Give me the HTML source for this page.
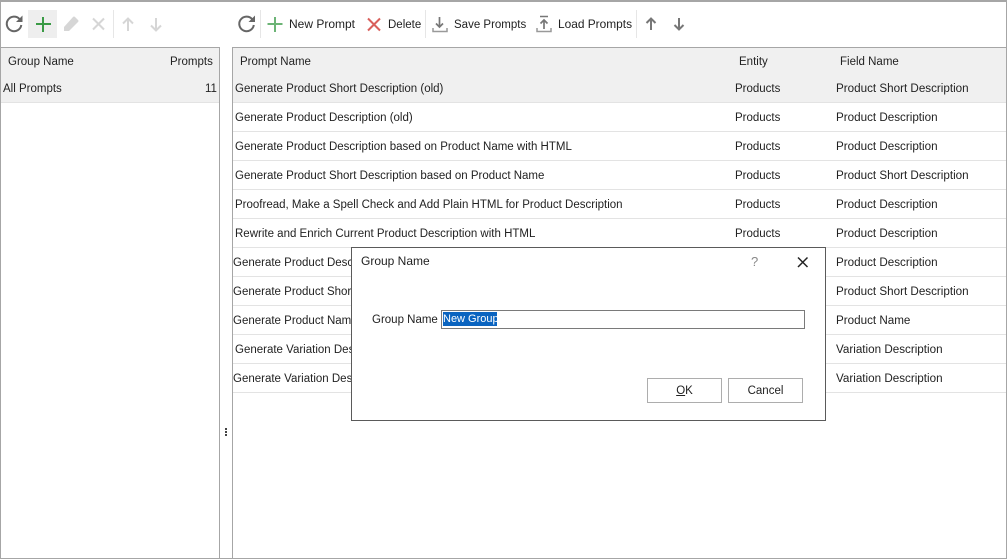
<!DOCTYPE html>
<html>
<head>
<meta charset="utf-8">
<style>
html,body{margin:0;padding:0;background:#fff}
#p{position:relative;width:1007px;height:559px;overflow:hidden;background:#fff;font-family:"Liberation Sans",sans-serif;font-size:11.5px;color:#222}
#p div{position:absolute}
.t{white-space:nowrap;line-height:16px;height:16px;margin-top:1px}
.n{margin-top:0}
.f{font-size:11.650px}
.l{background:#e3e3e3;height:1px}
svg{position:absolute;overflow:visible}
</style>
</head>
<body>
<div id="p">
<!-- outer frame -->
<div style="left:0;top:0;width:1007px;height:2px;background:#a6a6a6"></div>
<div style="left:0;top:0;width:1px;height:559px;background:#a6a6a6"></div>
<div style="left:1006px;top:0;width:1px;height:559px;background:#a6a6a6"></div>
<div style="left:0;top:558px;width:1007px;height:1px;background:#a6a6a6"></div>

<!-- left panel -->
<div style="left:0;top:47px;width:220px;height:1px;background:#a6a6a6"></div>
<div style="left:219px;top:47px;width:1px;height:512px;background:#a6a6a6"></div>
<div style="left:1px;top:48px;width:218px;height:54px;background:#f0f0f0"></div>
<div class="l" style="left:1px;top:102px;width:218px"></div>
<div class="t" style="left:8px;top:53px">Group Name</div>
<div class="t" style="left:170px;top:53px">Prompts</div>
<div class="t" style="left:3px;top:80px">All Prompts</div>
<div class="t" style="left:205px;top:80px">11</div>

<!-- right panel -->
<div style="left:232px;top:47px;width:775px;height:1px;background:#a6a6a6"></div>
<div style="left:232px;top:47px;width:1px;height:512px;background:#a6a6a6"></div>
<div style="left:233px;top:48px;width:773px;height:54px;background:#f0f0f0"></div>
<div class="t" style="left:240px;top:53px">Prompt Name</div>
<div class="t" style="left:739px;top:53px">Entity</div>
<div class="t" style="left:840px;top:53px">Field Name</div>

<div class="l" style="left:233px;top:102px;width:773px"></div>
<div class="l" style="left:233px;top:131px;width:773px"></div>
<div class="l" style="left:233px;top:160px;width:773px"></div>
<div class="l" style="left:233px;top:189px;width:773px"></div>
<div class="l" style="left:233px;top:218px;width:773px"></div>
<div class="l" style="left:233px;top:247px;width:773px"></div>
<div class="l" style="left:233px;top:276px;width:773px"></div>
<div class="l" style="left:233px;top:305px;width:773px"></div>
<div class="l" style="left:233px;top:334px;width:773px"></div>
<div class="l" style="left:233px;top:363px;width:773px"></div>
<div class="l" style="left:233px;top:392px;width:773px"></div>

<div class="t" style="left:235px;top:80px">Generate Product Short Description (old)</div>
<div class="t" style="left:235px;top:109px">Generate Product Description (old)</div>
<div class="t" style="left:235px;top:138px">Generate Product Description based on Product Name with HTML</div>
<div class="t" style="left:235px;top:167px">Generate Product Short Description based on Product Name</div>
<div class="t" style="left:235px;top:196px">Proofread, Make a Spell Check and Add Plain HTML for Product Description</div>
<div class="t" style="left:235px;top:225px">Rewrite and Enrich Current Product Description with HTML</div>
<div class="t" style="left:233px;top:254px">Generate Product Description</div>
<div class="t" style="left:233px;top:283px">Generate Product Short Description</div>
<div class="t" style="left:233px;top:312px">Generate Product Name</div>
<div class="t" style="left:235px;top:341px">Generate Variation Description</div>
<div class="t" style="left:233px;top:370px">Generate Variation Description</div>

<div class="t" style="left:735px;top:80px">Products</div>
<div class="t" style="left:735px;top:109px">Products</div>
<div class="t" style="left:735px;top:138px">Products</div>
<div class="t" style="left:735px;top:167px">Products</div>
<div class="t" style="left:735px;top:196px">Products</div>
<div class="t" style="left:735px;top:225px">Products</div>

<div class="t f" style="left:836px;top:80px">Product Short Description</div>
<div class="t f" style="left:836px;top:109px">Product Description</div>
<div class="t f" style="left:836px;top:138px">Product Description</div>
<div class="t f" style="left:836px;top:167px">Product Short Description</div>
<div class="t f" style="left:836px;top:196px">Product Description</div>
<div class="t f" style="left:836px;top:225px">Product Description</div>
<div class="t f" style="left:836px;top:254px">Product Description</div>
<div class="t f" style="left:836px;top:283px">Product Short Description</div>
<div class="t f" style="left:836px;top:312px">Product Name</div>
<div class="t f" style="left:836px;top:341px">Variation Description</div>
<div class="t f" style="left:836px;top:370px">Variation Description</div>

<!-- splitter dots -->
<div style="left:225px;top:428px;width:2px;height:2px;background:#444"></div>
<div style="left:225px;top:431px;width:2px;height:2px;background:#444"></div>
<div style="left:225px;top:434px;width:2px;height:2px;background:#444"></div>

<!-- left toolbar -->
<div style="left:28px;top:10px;width:29px;height:28px;background:#eeeeee"></div>
<svg style="left:0;top:0" width="240" height="47" fill="none">
<path d="M19.500 19A7.300 7.300 0 1 0 21.300 25" stroke="#666" stroke-width="2"/>
<path d="M22.500 15.500V22H16z" fill="#666"/>
<path d="M43 17v15M36 24h15" stroke="#3a9a45" stroke-width="2"/>
<path d="M64 27l9-10q1-1 2 0l3 3q1 1 0 2l-9 9h-5z" fill="#d6d6d6"/>
<path d="M93 18.500l11 11M104 18.500l-11 11" stroke="#d6d6d6" stroke-width="2"/>
<path d="M128 31V19M123 23.500l5-5 5 5" stroke="#d6d6d6" stroke-width="2"/>
<path d="M156 18v12M151 25.500l5 5 5-5" stroke="#d6d6d6" stroke-width="2"/>
<path d="M113.500 10v28" stroke="#e6e6e6"/>
</svg>

<!-- right toolbar -->
<svg style="left:0;top:0" width="1007" height="47" fill="none">
<path d="M252 19A7.300 7.300 0 1 0 253.800 25" stroke="#666" stroke-width="2"/>
<path d="M255 15.500V22H248.500z" fill="#666"/>
<path d="M260.500 10v28" stroke="#e6e6e6"/>
<path d="M275 17v15M267.500 24h15" stroke="#6cb476" stroke-width="2"/>
<path d="M368 18.500l12 12M380 18.500l-12 12" stroke="#d9605c" stroke-width="2"/>
<path d="M425.500 10v28" stroke="#e6e6e6"/>
<path d="M439.500 17v10M436 23.500l3.500 3.500 3.500-3.500" stroke="#777" stroke-width="1.700"/>
<path d="M433 28v3.500h14V28" stroke="#999" stroke-width="1.500"/>
<path d="M540 16.500h8" stroke="#777" stroke-width="1.500"/>
<path d="M544 29V20M540.500 23.500l3.500-3.500 3.500 3.500" stroke="#777" stroke-width="1.700"/>
<path d="M537 28v3.500h14V28" stroke="#999" stroke-width="1.500"/>
<path d="M636.500 10v28" stroke="#e6e6e6"/>
<path d="M651 30V18.500M646.500 23l4.500-4.500 4.500 4.500" stroke="#777" stroke-width="2"/>
<path d="M679 18v11.500M674.500 25l4.500 4.500 4.500-4.500" stroke="#777" stroke-width="2"/>
</svg>
<div class="t n" style="left:289px;top:16px;font-size:12px">New Prompt</div>
<div class="t" style="left:388px;top:16px">Delete</div>
<div class="t" style="left:454px;top:16px">Save Prompts</div>
<div class="t n" style="left:558px;top:16px;font-size:11.900px">Load Prompts</div>

<!-- dialog -->
<div style="left:351px;top:247px;width:473px;height:172px;background:#fff;border:1px solid #5a5a5a"></div>
<div class="t n" style="left:361px;top:253px;font-size:12px">Group Name</div>
<div class="t n" style="left:751px;top:254px;color:#888;font-size:13px">?</div>
<svg style="left:0;top:0" width="1007" height="559" fill="none">
<path d="M798 257.500l9.500 9.500M807.500 257.500l-9.500 9.500" stroke="#222" stroke-width="1.500"/>
</svg>
<div class="t" style="left:372px;top:311px">Group Name</div>
<div style="left:441px;top:310px;width:362px;height:17px;background:#fff;border:1px solid #7a7a7a"></div>
<div class="t n" style="left:443px;top:312px;width:54px;height:14px;line-height:15px;background:#0a64c0;color:#fff;font-size:11px">New Group</div>
<div class="t n" style="left:647px;top:378px;width:73px;height:23px;line-height:25px;border:1px solid #adadad;text-align:center"><u>O</u>K</div>
<div class="t n" style="left:728px;top:378px;width:73px;height:23px;line-height:25px;border:1px solid #adadad;text-align:center">Cancel</div>
</div>
</body>
</html>
